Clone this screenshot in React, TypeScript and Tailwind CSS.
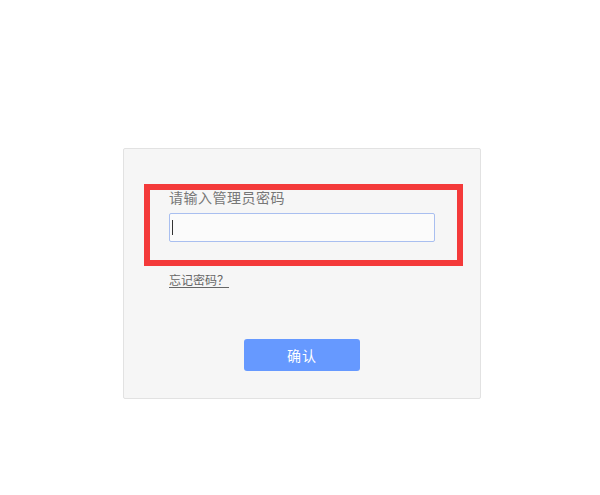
import React from "react";

export default function App() {
  return (
    <div
      className="relative w-[600px] h-[495px] bg-white pt-[148px] pl-[123px]"
      style={{ fontFamily: '"Noto Sans CJK SC", "Noto Sans", sans-serif' }}
    >
      <div className="w-[358px] h-[251px] border border-[#e2e2e2] bg-[#f6f6f6] rounded-[2px] pl-[45px] pt-[38px]">
        <div className="text-[14px] leading-[20px] tracking-[0.5px] text-[#777]">请输入管理员密码</div>
        <div className="mt-[6px] w-[266px] h-[29px] border border-[#a9bff0] rounded-[2px] bg-[#fbfbfb] flex items-center pl-[2px]">
          <span className="w-px h-[15px] bg-[#333]" />
        </div>
        <div className="mt-[30px] text-[12px] leading-[16px] text-[#666] underline underline-offset-2">忘记密码？</div>
        <button className="mt-[51px] ml-[75px] w-[116px] h-[32px] rounded-[3px] bg-[#6699ff] text-white text-[14px] leading-[32px] tracking-[1px] flex items-center justify-center">
          确认
        </button>
      </div>
      <div className="absolute left-[144px] top-[184px] w-[319px] h-[82px] border-[6px] border-[#f43a3a]" />
    </div>
  );
}
